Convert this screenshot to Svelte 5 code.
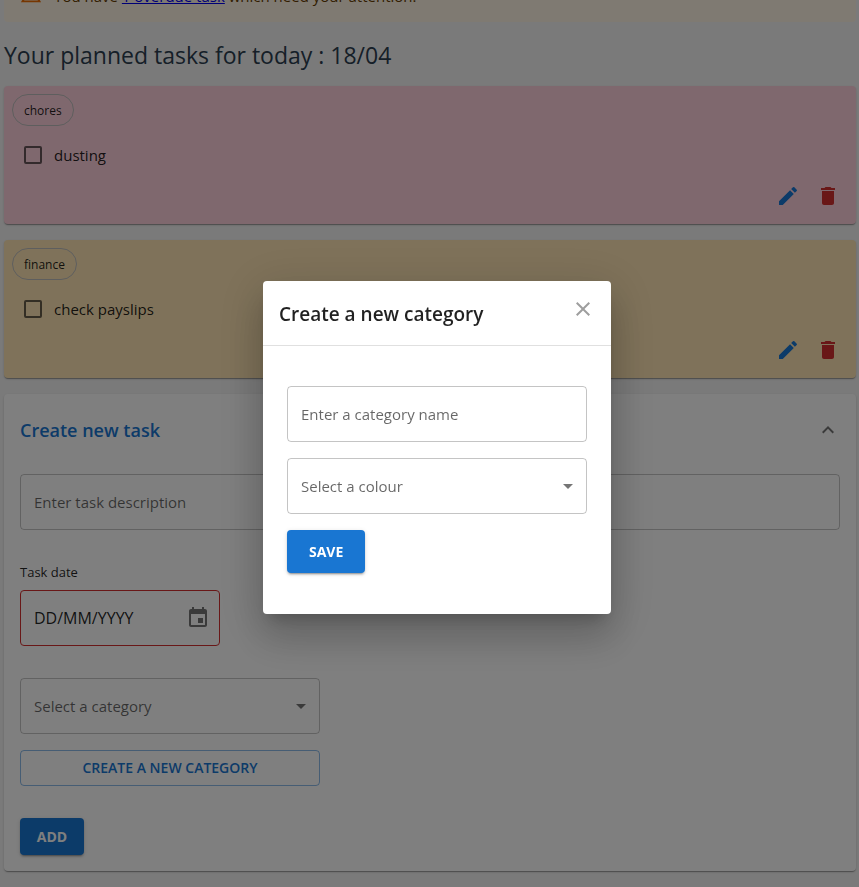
<script>
  const tasks = [
    { id: 1, category: 'chores', title: 'dusting', tone: 'pink' },
    { id: 2, category: 'finance', title: 'check payslips', tone: 'peach' }
  ];
  const categories = ['chores', 'finance'];
  const colours = ['Pink', 'Peach', 'Mint', 'Sky'];

  let modalOpen = $state(true);
  let expanded = $state(true);
</script>

<div class="page">
  <div class="alert" role="alert">
    <svg class="alert-icon" viewBox="0 0 24 24" aria-hidden="true">
      <path d="M12 5.99L19.53 19H4.47L12 5.99M12 2L1 21h22L12 2zm1 14h-2v2h2v-2zm0-6h-2v4h2v-4z" />
    </svg>
    <p>You have <a href="#overdue">1 overdue task</a> which need your attention.</p>
  </div>

  <h1>Your planned tasks for today : 18/04</h1>

  <main>
    {#each tasks as task (task.id)}
      <article class="card task {task.tone}">
        <span class="chip">{task.category}</span>
        <label class="check">
          <input type="checkbox" />
          <span>{task.title}</span>
        </label>
        <div class="actions">
          <button class="icon-btn edit" aria-label="Edit {task.title}">
            <svg viewBox="0 0 24 24"><path d="M3 17.25V21h3.75L17.81 9.94l-3.75-3.75L3 17.25zM20.71 7.04c.39-.39.39-1.02 0-1.41l-2.34-2.34a.9959.9959 0 0 0-1.41 0l-1.83 1.83 3.75 3.75 1.83-1.83z" /></svg>
          </button>
          <button class="icon-btn delete" aria-label="Delete {task.title}">
            <svg viewBox="0 0 24 24"><path d="M6 19c0 1.1.9 2 2 2h8c1.1 0 2-.9 2-2V7H6v12zM19 4h-3.5l-1-1h-5l-1 1H5v2h14V4z" /></svg>
          </button>
        </div>
      </article>
    {/each}

    <section class="card create">
      <button class="summary" aria-expanded={expanded} onclick={() => (expanded = !expanded)}>
        <span>Create new task</span>
        <svg class:closed={!expanded} viewBox="0 0 24 24" aria-hidden="true"><path d="M12 8l-6 6 1.41 1.41L12 10.83l4.59 4.58L18 14z" /></svg>
      </button>
      {#if expanded}
        <form class="details" onsubmit={(e) => e.preventDefault()}>
          <input class="field" type="text" placeholder="Enter task description" aria-label="Task description" />

          <div class="date-group">
            <label for="task-date">Task date</label>
            <div class="date field">
              <input id="task-date" type="text" value="DD/MM/YYYY" aria-invalid="true" />
              <button type="button" class="calendar" aria-label="Choose date">
                <svg viewBox="0 0 24 24"><path d="M17 12h-5v5h5v-5zM16 1v2H8V1H6v2H5c-1.11 0-1.99.9-1.99 2L3 19c0 1.1.89 2 2 2h14c1.1 0 2-.9 2-2V5c0-1.1-.9-2-2-2h-1V1h-2zm3 18H5V8h14v11z" /></svg>
              </button>
            </div>
          </div>

          <div class="category-group">
            <div class="select">
              <select class="field" aria-label="Category">
                <option value="">Select a category</option>
                {#each categories as name}<option>{name}</option>{/each}
              </select>
              <svg viewBox="0 0 24 24" aria-hidden="true"><path d="M7 10l5 5 5-5z" /></svg>
            </div>
            <button type="button" class="outlined" onclick={() => (modalOpen = true)}>CREATE A NEW CATEGORY</button>
          </div>

          <button class="contained add">ADD</button>
        </form>
      {/if}
    </section>
  </main>
</div>

{#if modalOpen}
  <div class="backdrop">
    <div class="modal" role="dialog" aria-modal="true" aria-labelledby="modal-title">
      <header>
        <h2 id="modal-title">Create a new category</h2>
        <button class="icon-btn close" aria-label="Close" onclick={() => (modalOpen = false)}>
          <svg viewBox="0 0 24 24"><path d="M19 6.41L17.59 5 12 10.59 6.41 5 5 6.41 10.59 12 5 17.59 6.41 19 12 13.41 17.59 19 19 17.59 13.41 12z" /></svg>
        </button>
      </header>
      <form class="modal-body" onsubmit={(e) => e.preventDefault()}>
        <input class="field" type="text" placeholder="Enter a category name" aria-label="Category name" />
        <div class="select">
          <select class="field" aria-label="Colour">
            <option value="">Select a colour</option>
            {#each colours as name}<option>{name}</option>{/each}
          </select>
          <svg viewBox="0 0 24 24" aria-hidden="true"><path d="M7 10l5 5 5-5z" /></svg>
        </div>
        <button class="contained save">SAVE</button>
      </form>
    </div>
  </div>
{/if}

<style>
  :global(html) {
    overflow: hidden;
  }
  :global(body) {
    background: #f5f5f5;
    font-family: 'Segoe UI', 'Open Sans', 'Noto Sans', sans-serif;
    font-size: 15px;
    line-height: 24px;
    color: rgba(0, 0, 0, 0.87);
  }
  .page,
  .page *,
  .backdrop,
  .backdrop * {
    box-sizing: border-box;
  }
  button,
  input,
  select {
    font: inherit;
    color: inherit;
    margin: 0;
  }
  button {
    border: 0;
    background: none;
    cursor: pointer;
  }
  svg {
    display: block;
    width: 24px;
    height: 24px;
    fill: currentColor;
  }

  .page {
    padding: 0 3px 16px 4px;
  }
  .alert {
    display: flex;
    align-items: flex-start;
    gap: 12px;
    height: 52px;
    margin-top: -30px;
    padding: 13px 16px;
    border-radius: 4px;
    background: #fff4e5;
    color: #663c00;
  }
  .alert-icon {
    width: 22px;
    height: 22px;
    color: #ed6c02;
  }
  .alert p {
    margin: 0;
    line-height: 26px;
  }
  .alert a {
    color: #0000ee;
    font-weight: 500;
    text-decoration-thickness: 1px;
  }
  h1 {
    margin: 17px 0 15px;
    font-size: 23px;
    line-height: 32px;
    font-weight: 400;
    color: #2c3e50;
  }
  main {
    display: flex;
    flex-direction: column;
    gap: 16px;
  }
  .card {
    border-radius: 4px;
    background: #fff;
    box-shadow: 0 2px 1px -1px rgba(0, 0, 0, 0.2), 0 1px 1px rgba(0, 0, 0, 0.14), 0 1px 3px rgba(0, 0, 0, 0.12);
  }
  .task {
    display: flex;
    flex-direction: column;
    align-items: flex-start;
    padding: 8px;
  }
  .pink {
    background: #ffd1dc;
  }
  .peach {
    background: #ffe5b4;
  }
  .chip {
    height: 32px;
    padding: 0 11px;
    border: 1px solid #bdbdbd;
    border-radius: 16px;
    font-size: 12px;
    line-height: 32px;
  }
  .check {
    display: flex;
    align-items: center;
    gap: 12px;
    height: 42px;
    margin: 8px 0 0 12px;
  }
  .check input {
    appearance: none;
    width: 18px;
    height: 18px;
    border: 2px solid rgba(0, 0, 0, 0.6);
    border-radius: 2px;
  }
  .check input:checked {
    background: #1976d2;
  }
  .actions {
    display: flex;
    align-self: flex-end;
  }
  .icon-btn {
    padding: 8px;
  }
  .edit {
    color: #1976d2;
  }
  .delete {
    color: #d32f2f;
  }

  .summary {
    display: flex;
    align-items: center;
    justify-content: space-between;
    width: 100%;
    height: 72px;
    padding: 0 16px;
    font-size: 18px;
    line-height: 27px;
    font-weight: 600;
    color: #1976d2;
  }
  .summary svg {
    color: rgba(0, 0, 0, 0.54);
  }
  .closed {
    transform: rotate(180deg);
  }
  .details {
    display: flex;
    flex-direction: column;
    align-items: flex-start;
    gap: 32px;
    padding: 8px 16px 16px;
  }
  .field {
    display: block;
    width: 100%;
    height: 56px;
    padding: 0 13px;
    border: 1px solid rgba(0, 0, 0, 0.23);
    border-radius: 4px;
    background: transparent;
  }
  .field::placeholder {
    color: rgba(0, 0, 0, 0.6);
    opacity: 1;
  }
  .select {
    position: relative;
    width: 100%;
  }
  .select select {
    appearance: none;
    color: rgba(0, 0, 0, 0.6);
  }
  .select svg {
    position: absolute;
    top: 16px;
    right: 7px;
    color: rgba(0, 0, 0, 0.54);
    pointer-events: none;
  }
  .date-group {
    width: 200px;
  }
  .date-group label {
    display: block;
    margin-bottom: 8px;
    font-size: 13px;
    line-height: 20px;
  }
  .date {
    display: flex;
    align-items: center;
    justify-content: space-between;
    padding: 0 9px 0 13px;
    border-color: #d32f2f;
  }
  .date input {
    width: 130px;
    padding: 0;
    border: 0;
    outline: 0;
    background: transparent;
    font-size: 16px;
  }
  .calendar {
    padding: 0;
    color: rgba(0, 0, 0, 0.54);
  }
  .category-group {
    display: flex;
    flex-direction: column;
    gap: 16px;
    width: 300px;
  }
  .outlined {
    height: 36px;
    border: 1px solid rgba(25, 118, 210, 0.5);
    border-radius: 4px;
    font-size: 14px;
    font-weight: 600;
    color: #1976d2;
  }
  .contained {
    min-width: 64px;
    border-radius: 4px;
    background: #1976d2;
    color: #fff;
    font-size: 14px;
    font-weight: 700;
    box-shadow: 0 3px 1px -2px rgba(0, 0, 0, 0.2), 0 2px 2px rgba(0, 0, 0, 0.14), 0 1px 5px rgba(0, 0, 0, 0.12);
  }
  .add {
    height: 37px;
    padding: 0 16px;
  }
  .save {
    height: 43px;
    padding: 0 22px;
  }

  .backdrop {
    position: fixed;
    inset: 0;
    display: flex;
    align-items: center;
    justify-content: center;
    padding: 8px 0 0 15px;
    background: rgba(0, 0, 0, 0.5);
  }
  .modal {
    width: 348px;
    border-radius: 4px;
    background: #fff;
    box-shadow: 0 11px 15px -7px rgba(0, 0, 0, 0.2), 0 24px 38px 3px rgba(0, 0, 0, 0.14), 0 9px 46px 8px rgba(0, 0, 0, 0.12);
  }
  .modal header {
    display: flex;
    align-items: flex-start;
    justify-content: space-between;
    padding: 8px 8px 15px 16px;
    border-bottom: 1px solid rgba(0, 0, 0, 0.12);
  }
  h2 {
    margin: 9px 0 0;
    font-size: 19px;
    line-height: 32px;
    font-weight: 600;
  }
  .close {
    color: #9e9e9e;
  }
  .modal-body {
    display: flex;
    flex-direction: column;
    align-items: flex-start;
    gap: 16px;
    padding: 40px 24px 41px;
  }
</style>
